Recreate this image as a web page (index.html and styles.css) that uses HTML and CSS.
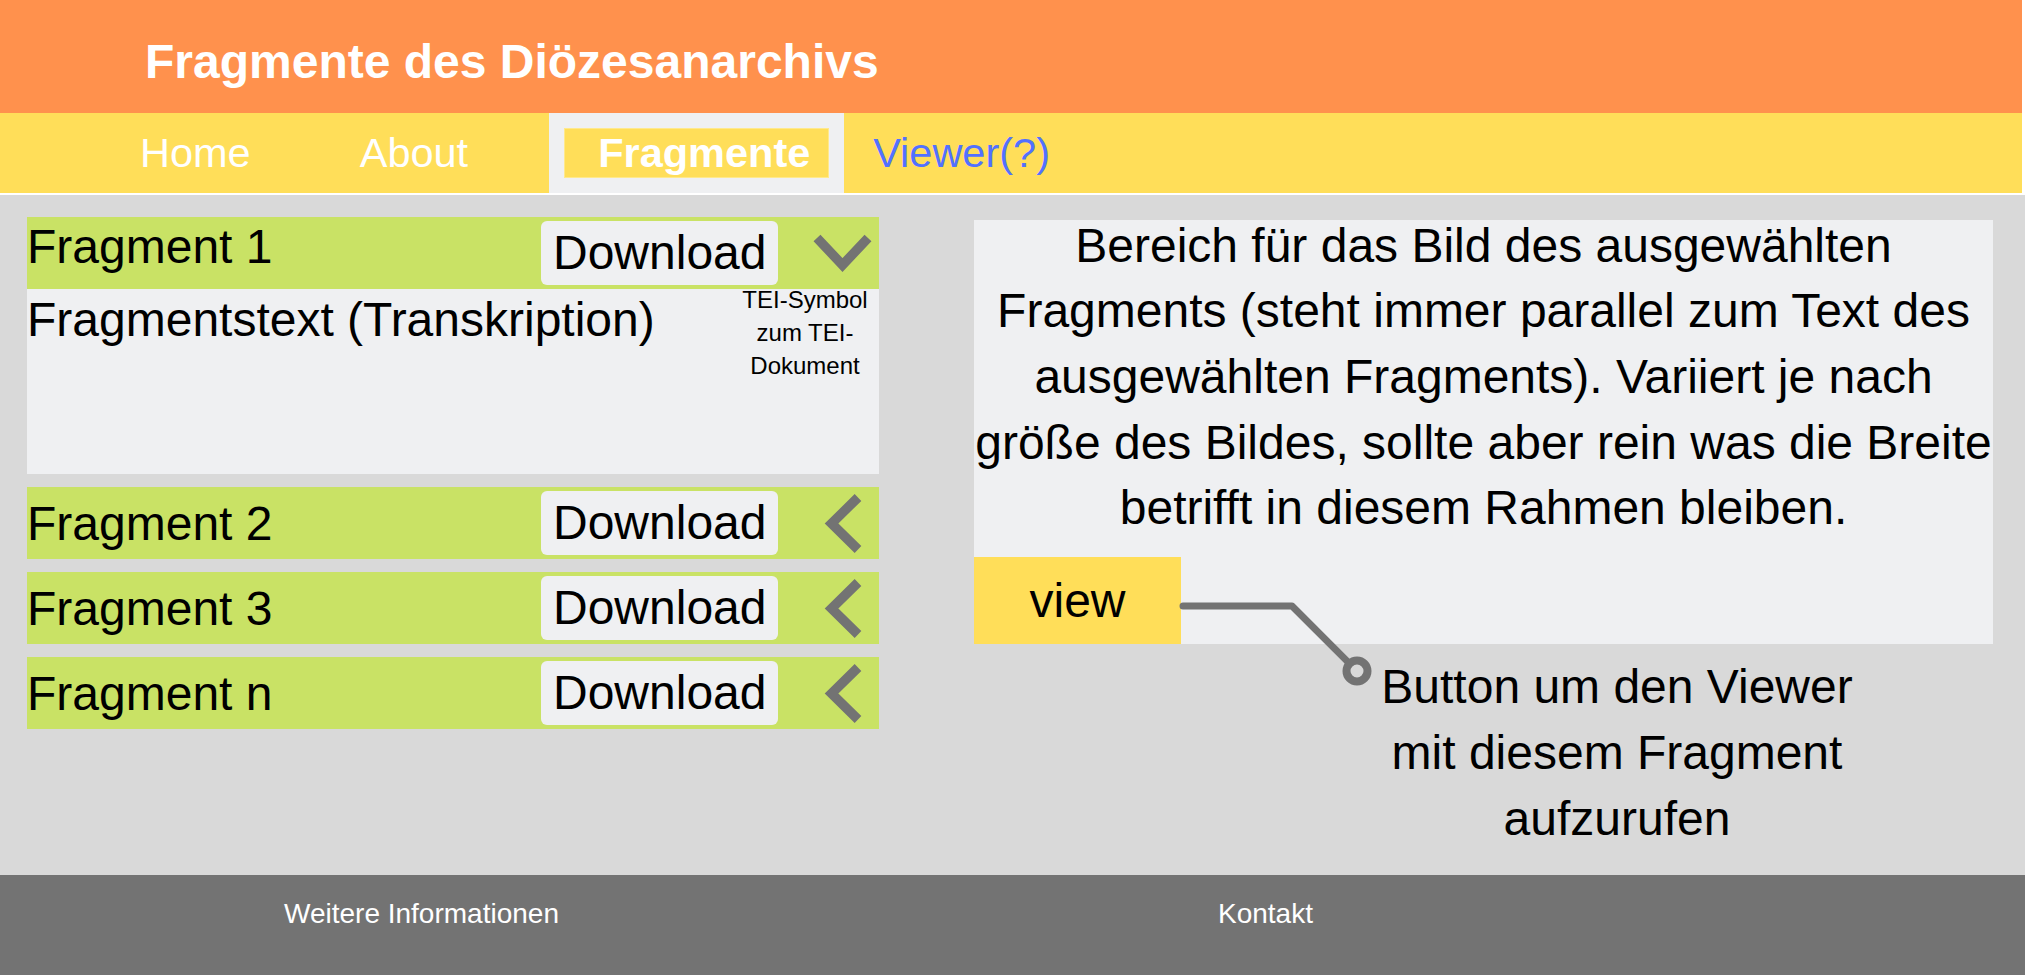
FILE: index.html
```html
<!DOCTYPE html>
<html lang="de">
<head>
<meta charset="utf-8">
<title>Fragmente des Diözesanarchivs</title>
<link rel="stylesheet" href="styles.css">
</head>
<body>
<header class="topbar">
  <h1 class="site-title">Fragmente des Diözesanarchivs</h1>
</header>
<nav class="navbar">
  <a class="nav-link nav-home">Home</a>
  <a class="nav-link nav-about">About</a>
  <div class="nav-active"><span class="nav-active-inner">Fragmente</span></div>
  <a class="nav-link nav-viewer">Viewer(?)</a>
</nav>
<main class="main">
  <section class="fragments">
    <div class="frag frag-open">
      <div class="frag-head frag-head-top">
        <span class="frag-title">Fragment 1</span>
        <span class="dl-btn">Download</span>
        <span class="chev">
          <svg width="101" height="72" viewBox="0 0 101 72"><polyline points="39,21 64.5,48 90,21" fill="none" stroke="#737373" stroke-width="9.5" stroke-linejoin="miter"/></svg>
        </span>
      </div>
      <div class="frag-body">
        <span class="frag-text">Fragmentstext (Transkription)</span>
        <span class="tei-note">TEI-Symbol<br>zum TEI-<br>Dokument</span>
      </div>
    </div>
    <div class="frag">
      <div class="frag-head">
        <span class="frag-title">Fragment 2</span>
        <span class="dl-btn">Download</span>
        <span class="chev">
          <svg width="101" height="72" viewBox="0 0 101 72"><polyline points="80,10.5 53.5,36.5 80,62.5" fill="none" stroke="#737373" stroke-width="9.5" stroke-linejoin="miter"/></svg>
        </span>
      </div>
    </div>
    <div class="frag">
      <div class="frag-head">
        <span class="frag-title">Fragment 3</span>
        <span class="dl-btn">Download</span>
        <span class="chev">
          <svg width="101" height="72" viewBox="0 0 101 72"><polyline points="80,10.5 53.5,36.5 80,62.5" fill="none" stroke="#737373" stroke-width="9.5" stroke-linejoin="miter"/></svg>
        </span>
      </div>
    </div>
    <div class="frag">
      <div class="frag-head">
        <span class="frag-title">Fragment n</span>
        <span class="dl-btn">Download</span>
        <span class="chev">
          <svg width="101" height="72" viewBox="0 0 101 72"><polyline points="80,10.5 53.5,36.5 80,62.5" fill="none" stroke="#737373" stroke-width="9.5" stroke-linejoin="miter"/></svg>
        </span>
      </div>
    </div>
  </section>
  <section class="viewer-col">
    <div class="image-panel">
      <p class="image-text">Bereich für das Bild des ausgewählten<br>Fragments (steht immer parallel zum Text des<br>ausgewählten Fragments). Variiert je nach<br>größe des Bildes, sollte aber rein was die Breite<br>betrifft in diesem Rahmen bleiben.</p>
      <span class="view-btn">view</span>
    </div>
    <p class="annotation">Button um den Viewer<br>mit diesem Fragment<br>aufzurufen</p>
    <svg class="connector" width="200" height="95" viewBox="0 0 200 95">
      <polyline points="8,11 117,11 174.6,68.6" fill="none" stroke="#737373" stroke-width="7" stroke-linecap="round" stroke-linejoin="round"/>
      <circle cx="182" cy="76" r="10.5" fill="none" stroke="#737373" stroke-width="8"/>
    </svg>
  </section>
</main>
<footer class="footer">
  <span class="footer-link">Weitere Informationen</span>
  <span class="footer-link footer-contact">Kontakt</span>
</footer>
</body>
</html>
```

FILE: styles.css
```css
html, body {
  margin: 0;
  padding: 0;
}

body {
  background: #ffffff;
  font-family: "Liberation Sans", Arial, sans-serif;
  color: #000000;
  width: 2025px;
  height: 975px;
  overflow: hidden;
}

.topbar {
  width: calc(100% - 3px);
  height: 113px;
  background: #ff914d;
  box-sizing: border-box;
  padding: 34px 0 0 145px;
}

.site-title {
  margin: 0;
  font-size: 48px;
  font-weight: bold;
  line-height: normal;
  color: #ffffff;
}

.navbar {
  width: calc(100% - 3px);
  height: 80px;
  background: #ffde59;
  display: flex;
  align-items: center;
  box-sizing: border-box;
  padding-left: 140px;
  font-size: 41.5px;
}

.nav-link {
  color: #ffffff;
  text-decoration: none;
  line-height: normal;
}

.nav-home {
  margin-right: 109px;
}

.nav-about {
  margin-right: 81px;
}

.nav-active {
  align-self: stretch;
  width: 295px;
  background: #eff0f2;
  box-sizing: border-box;
  padding: 15px 15px 15px 15px;
  display: flex;
  margin-right: 29px;
}

.nav-active-inner {
  flex: 1;
  background: #ffde59;
  border: 1px solid #ffe98c;
  color: #ffffff;
  font-weight: bold;
  display: flex;
  align-items: center;
  padding-left: 33px;
  line-height: normal;
}

.nav-viewer {
  color: #5271ff;
}

.main {
  margin-top: 2px;
  height: 680px;
  background: #d9d9d9;
  display: flex;
  align-items: flex-start;
}

.fragments {
  width: 852px;
  margin-left: 27px;
  padding-top: 22px;
  display: flex;
  flex-direction: column;
  gap: 13px;
}

.frag-head {
  height: 72px;
  background: #c9e265;
  display: flex;
  align-items: center;
}

.frag-head-top {
  align-items: flex-start;
}

.frag-title {
  flex: 1;
  font-size: 48px;
  line-height: normal;
}

.frag-head-top .frag-title {
  padding-top: 2px;
}

.dl-btn {
  width: 237px;
  height: 64px;
  box-sizing: border-box;
  background: #eff0f2;
  border-radius: 6px;
  font-size: 48px;
  line-height: 64px;
  padding-left: 12px;
  white-space: nowrap;
}

.frag-head-top .dl-btn {
  margin-top: 4px;
}

.chev {
  width: 101px;
  height: 72px;
  display: block;
  align-self: flex-start;
}

.chev svg {
  display: block;
}

.frag-body {
  height: 185px;
  background: #eff0f2;
  display: flex;
  justify-content: space-between;
  align-items: flex-start;
}

.frag-text {
  font-size: 48px;
  line-height: normal;
  padding-top: 3px;
  white-space: nowrap;
}

.tei-note {
  width: 140px;
  margin-top: -6px;
  margin-right: 4px;
  font-size: 24px;
  line-height: 33px;
  text-align: center;
}

.viewer-col {
  position: relative;
  width: 1019px;
  margin-left: 95px;
  padding-top: 25px;
}

.image-panel {
  height: 424px;
  background: #eff0f2;
  display: flex;
  flex-direction: column;
  align-items: flex-start;
}

.image-text {
  margin: -7.5px 0 0 0;
  align-self: stretch;
  font-size: 48px;
  line-height: 65.7px;
  text-align: center;
  white-space: nowrap;
}

.view-btn {
  margin-top: auto;
  width: 207px;
  height: 87px;
  background: #ffde59;
  font-size: 48px;
  display: flex;
  align-items: center;
  justify-content: center;
  line-height: normal;
}

.annotation {
  margin: 9.5px 0 0 393px;
  width: 500px;
  font-size: 48px;
  line-height: 66px;
  text-align: center;
  white-space: nowrap;
}

.connector {
  position: absolute;
  left: 201px;
  top: 400px;
}

.footer {
  height: 100px;
  background: #737373;
  box-sizing: border-box;
  padding: 23px 0 0 284px;
  display: flex;
  align-items: flex-start;
}

.footer-link {
  color: #ffffff;
  font-size: 28px;
  line-height: normal;
  white-space: nowrap;
}

.footer-contact {
  margin-left: 659px;
}
```
